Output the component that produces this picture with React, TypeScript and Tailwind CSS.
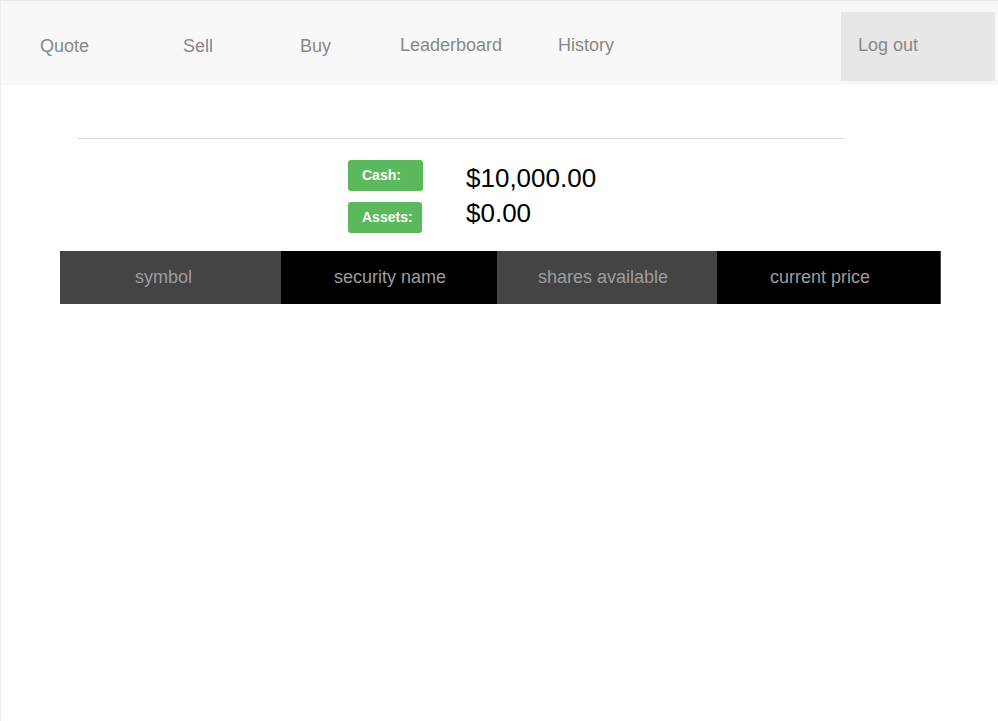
import React from "react";

const font = { fontFamily: '"Liberation Sans", Arial, sans-serif' };

export default function App() {
  return (
    <div
      className="h-[721px] w-[998px] border-l border-[#eeeeee] bg-white overflow-hidden"
      style={font}
    >
      <nav className="flex h-[85px] border-t border-[#e7e7e7] bg-[#f8f8f8]">
        <div className="flex flex-1 items-center pl-[39px] pt-[6px]">
          <a className="w-[143px] text-[18px] text-[#888888]">Quote</a>
          <a className="w-[117px] text-[18px] text-[#888888]">Sell</a>
          <a className="w-[100px] text-[18px] text-[#888888]">Buy</a>
          <a className="w-[158px] text-[18px] text-[#888888] -mt-[1px]">Leaderboard</a>
          <a className="w-[120px] text-[18px] text-[#888888] -mt-[1px]">History</a>
        </div>
        <div className="mt-[11px] mr-[3px] flex h-[69px] w-[154px] items-center bg-[#e7e7e7] pb-[2px] pl-[17px] text-[18px] text-[#888888]">
          Log out
        </div>
      </nav>

      <div className="ml-[76px] mt-[53px] h-px w-[768px] bg-[#dddddd]" />

      <div className="ml-[347px] mt-[21px] flex">
        <div className="flex w-[118px] flex-col">
          <div className="flex h-[31px] w-[75px] items-center rounded-[3px] bg-[#5cb85c] pl-[14px] text-[14px] font-bold text-white">
            Cash:
          </div>
          <div className="mt-[11px] flex h-[31px] w-[74px] items-center rounded-[3px] bg-[#5cb85c] pl-[14px] text-[14px] font-bold text-white">
            Assets:
          </div>
        </div>
        <div className="flex flex-col pt-[1px]">
          <div className="h-[35px] text-[26px] leading-[35px] text-black">$10,000.00</div>
          <div className="h-[35px] text-[26px] leading-[35px] text-black">$0.00</div>
        </div>
      </div>

      <div className="ml-[59px] mt-[18px] flex h-[53px] text-[18px] text-[#9d9d9d]">
        <div className="flex w-[221px] items-center bg-[#444444] pl-[75px]">symbol</div>
        <div className="flex w-[216px] items-center bg-black pl-[53px]">security name</div>
        <div className="flex w-[220px] items-center bg-[#444444] pl-[41px]">shares available</div>
        <div className="flex w-[224px] items-center border-r border-[#444444] bg-black pl-[53px]">
          current price
        </div>
      </div>
    </div>
  );
}
